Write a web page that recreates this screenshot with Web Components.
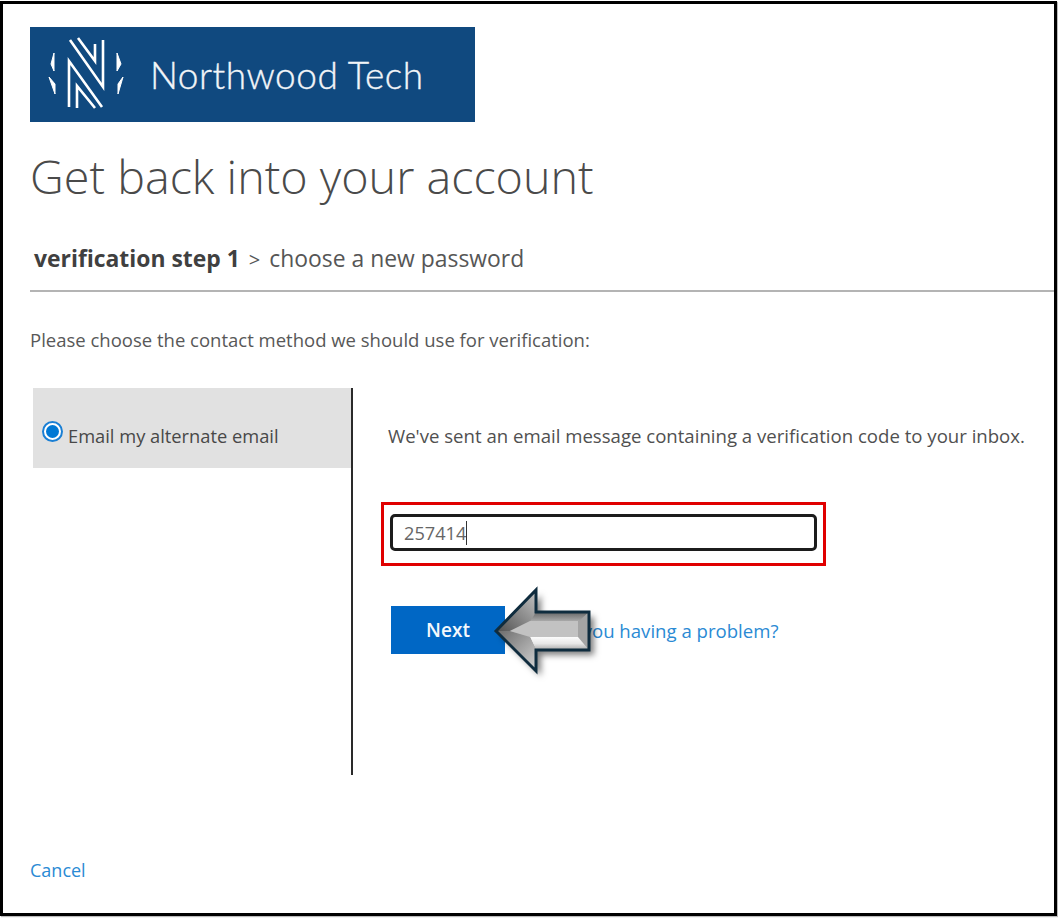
<!DOCTYPE html>
<html lang="en">
<head>
<meta charset="utf-8">
<title>Get back into your account</title>
<style>
  html, body { margin: 0; background: #fff; }
  body { font-family: "Open Sans", "Noto Sans", sans-serif; color: #505050; }
</style>
</head>
<body>
<recovery-page>
  <brand-logo slot="logo">Northwood Tech</brand-logo>
  <span slot="title">Get back into your account</span>
  <step-trail slot="steps" current="verification step 1" next="choose a new password"></step-trail>
  <span slot="prompt">Please choose the contact method we should use for verification:</span>
  <method-panel slot="method">
    <method-option label="Email my alternate email"></method-option>
    <verify-form slot="detail"></verify-form>
  </method-panel>
</recovery-page>

<script>
class RecoveryPage extends HTMLElement {
  constructor() {
    super();
    this.attachShadow({ mode: 'open' });
    this.shadowRoot.innerHTML = `
      <style>
        :host { display: block; width: 1058px; height: 918px; box-sizing: border-box; padding: 1px 0 2px; }
        .frame {
          box-sizing: border-box;
          height: 100%;
          width: 1057px;
          border: 3px solid #000;
          box-shadow: 1px 1px 1px #bbb;
          padding: 23px 0 0 27px;
          display: flex;
          flex-direction: column;
        }
        h1 {
          margin: 16px 0 0;
          font-size: 46.7px;
          line-height: 76px;
          font-weight: 300;
          color: #4a4a4a;
        }
        hr { margin: 0; border: 0; height: 2px; background: #b4b4b4; flex: none; }
        .prompt { margin-top: 36px; font-size: 18.5px; line-height: 24px; color: #585858; white-space: nowrap; }
        .method { margin-top: 36px; }
        .cancel { margin-top: 83px; font-size: 18px; line-height: 24px; color: #2a8ad4; }
      </style>
      <div class="frame">
        <slot name="logo"></slot>
        <h1><slot name="title"></slot></h1>
        <slot name="steps"></slot>
        <hr>
        <div class="prompt"><slot name="prompt"></slot></div>
        <div class="method"><slot name="method"></slot></div>
        <div class="cancel">Cancel</div>
      </div>
    `;
  }
}

class BrandLogo extends HTMLElement {
  constructor() {
    super();
    this.attachShadow({ mode: 'open' });
    this.shadowRoot.innerHTML = `
      <style>
        :host {
          display: flex;
          align-items: center;
          gap: 23px;
          box-sizing: border-box;
          width: 445px;
          height: 95px;
          padding-left: 17px;
          background: #10497f;
          color: #f2f5f8;
          font-family: Lato, "Open Sans", sans-serif;
          font-size: 37px;
          font-weight: 300;
          letter-spacing: .5px;
          -webkit-text-stroke: .35px #f2f5f8;
        }
        svg { display: block; flex: none; filter: blur(.35px); }
      </style>
      <svg width="80" height="78" viewBox="47 36 80 78" fill="none" stroke="#fff" stroke-width="2.6">
        <path d="M70 40 103 87V40M78 38 95 61V44"/>
        <path d="M69 107V61L102 107M77 108V86L95 108"/>
        <path d="M54 53V71L51 64ZM49 77 55 84V94Z" fill="#fff" stroke-width="1"/>
        <path d="M117 53V71L121 64ZM123 77 118 84V94Z" fill="#fff" stroke-width="1"/>
      </svg>
      <slot></slot>
    `;
  }
}

class StepTrail extends HTMLElement {
  constructor() {
    super();
    this.attachShadow({ mode: 'open' });
    this.shadowRoot.innerHTML = `
      <style>
        :host {
          display: flex;
          align-items: baseline;
          gap: 9px;
          height: 46px;
          padding: 30px 0 0 4px;
          font-size: 22.9px;
          line-height: 30px;
          color: #565656;
        }
        b { font-weight: 700; color: #404040; }
        .sep { font-size: 20px; }
      </style>
      <b>${this.getAttribute('current')}</b>
      <span class="sep">&gt;</span>
      <span>${this.getAttribute('next')}</span>
    `;
  }
}

class MethodPanel extends HTMLElement {
  constructor() {
    super();
    this.attachShadow({ mode: 'open' });
    this.shadowRoot.innerHTML = `
      <style>
        :host { display: flex; height: 387px; padding-left: 3px; }
        .side { width: 318px; flex: none; }
        .rule { width: 2px; flex: none; background: #2a2a2a; }
        .detail { flex: 1; min-width: 0; padding-left: 35px; }
      </style>
      <div class="side"><slot></slot></div>
      <div class="rule"></div>
      <div class="detail"><slot name="detail"></slot></div>
    `;
  }
}

class MethodOption extends HTMLElement {
  constructor() {
    super();
    this.attachShadow({ mode: 'open' });
    this.shadowRoot.innerHTML = `
      <style>
        :host {
          display: flex;
          align-items: center;
          gap: 5px;
          box-sizing: border-box;
          height: 80px;
          padding: 14px 0 0 9px;
          background: #e1e1e1;
          font-size: 18.3px;
          color: #484848;
        }
        .radio {
          box-sizing: border-box;
          width: 21px;
          height: 21px;
          margin-top: -8px;
          flex: none;
          border-radius: 50%;
          border: 2px solid #1a7fd4;
          background: #fff;
          padding: 2px;
        }
        .radio i { display: block; height: 100%; border-radius: 50%; background: #0078d4; }
      </style>
      <span class="radio"><i></i></span>
      <span>${this.getAttribute('label')}</span>
    `;
  }
}

class VerifyForm extends HTMLElement {
  constructor() {
    super();
    this.attachShadow({ mode: 'open' });
    this.shadowRoot.innerHTML = `
      <style>
        :host { display: block; color: #505050; }
        .msg { padding-top: 35px; font-size: 18.6px; line-height: 26px; white-space: nowrap; }
        .mark {
          box-sizing: border-box;
          width: 445px;
          height: 64px;
          margin: 53px 0 0 -7px;
          border: 3px solid #e00000;
          padding: 9px 6px;
        }
        .input {
          box-sizing: border-box;
          height: 37px;
          border: 3px solid #1c1c1c;
          border-radius: 5px;
          background: #fff;
          padding: 0 0 0 11px;
          display: flex;
          align-items: center;
          font-size: 18.2px;
          color: #666;
        }
        .caret { width: 1px; height: 24px; background: #333; }
        .actions { position: relative; display: flex; align-items: center; margin: 40px 0 0 3px; }
        .next {
          width: 114px;
          height: 48px;
          display: flex;
          align-items: center;
          justify-content: center;
          background: #0067c5;
          color: #f4f8fc;
          font-size: 19px;
          font-weight: 600;
        }
        .help { margin-left: 43px; font-size: 18.6px; color: #2a8ad4; white-space: nowrap; }
        .arrow { position: absolute; left: 99px; top: -21px; overflow: visible; }
      </style>
      <div class="msg">We've sent an email message containing a verification code to your inbox.</div>
      <div class="mark">
        <div class="input"><span>257414</span><span class="caret"></span></div>
      </div>
      <div class="actions">
        <div class="next">Next</div>
        <div class="help">Are you having a problem?</div>
        <svg class="arrow" width="110" height="100" viewBox="0 0 110 100">
          <defs>
            <filter id="sh" x="-20%" y="-20%" width="150%" height="150%">
              <feDropShadow dx="5" dy="5" stdDeviation="3" flood-color="#000" flood-opacity=".5"/>
            </filter>
            <linearGradient id="headTop" x1="0" y1="1" x2="1" y2="0">
              <stop offset="0" stop-color="#505050"/>
              <stop offset="1" stop-color="#c4c4c4"/>
            </linearGradient>
            <linearGradient id="headBot" x1="0" y1="0" x2="1" y2="1">
              <stop offset="0" stop-color="#6a6a6a"/>
              <stop offset="1" stop-color="#d4d4d4"/>
            </linearGradient>
            <linearGradient id="shaftTop" x1="0" y1="0" x2="0" y2="1">
              <stop offset="0" stop-color="#666"/>
              <stop offset="1" stop-color="#b0b0b0"/>
            </linearGradient>
            <linearGradient id="shaftBot" x1="0" y1="0" x2="0" y2="1">
              <stop offset="0" stop-color="#fcfcfc"/>
              <stop offset=".5" stop-color="#e8e8e8"/>
              <stop offset="1" stop-color="#a8a8a8"/>
            </linearGradient>
          </defs>
          <path d="M6 46 46 5V27H99V65H46V86Z" fill="#999" filter="url(#sh)"/>
          <path d="M6 46 46 5V27L40 36 20 46Z" fill="url(#headTop)"/>
          <path d="M46 27H99L88 37H40Z" fill="url(#shaftTop)"/>
          <path d="M99 27V65L88 52V37Z" fill="#a4a4a4"/>
          <path d="M46 65H99L88 52H40Z" fill="url(#shaftBot)"/>
          <path d="M6 46 46 86V65L40 52 20 46Z" fill="url(#headBot)"/>
          <path d="M20 46 40 36H88V52H40Z" fill="#c2c2c2"/>
          <path d="M6 46 46 5V27H99V65H46V86Z" fill="none" stroke="#0f2c3e" stroke-width="3"/>
        </svg>
      </div>
    `;
  }
}

customElements.define('brand-logo', BrandLogo);
customElements.define('step-trail', StepTrail);
customElements.define('method-option', MethodOption);
customElements.define('verify-form', VerifyForm);
customElements.define('method-panel', MethodPanel);
customElements.define('recovery-page', RecoveryPage);
</script>
</body>
</html>
